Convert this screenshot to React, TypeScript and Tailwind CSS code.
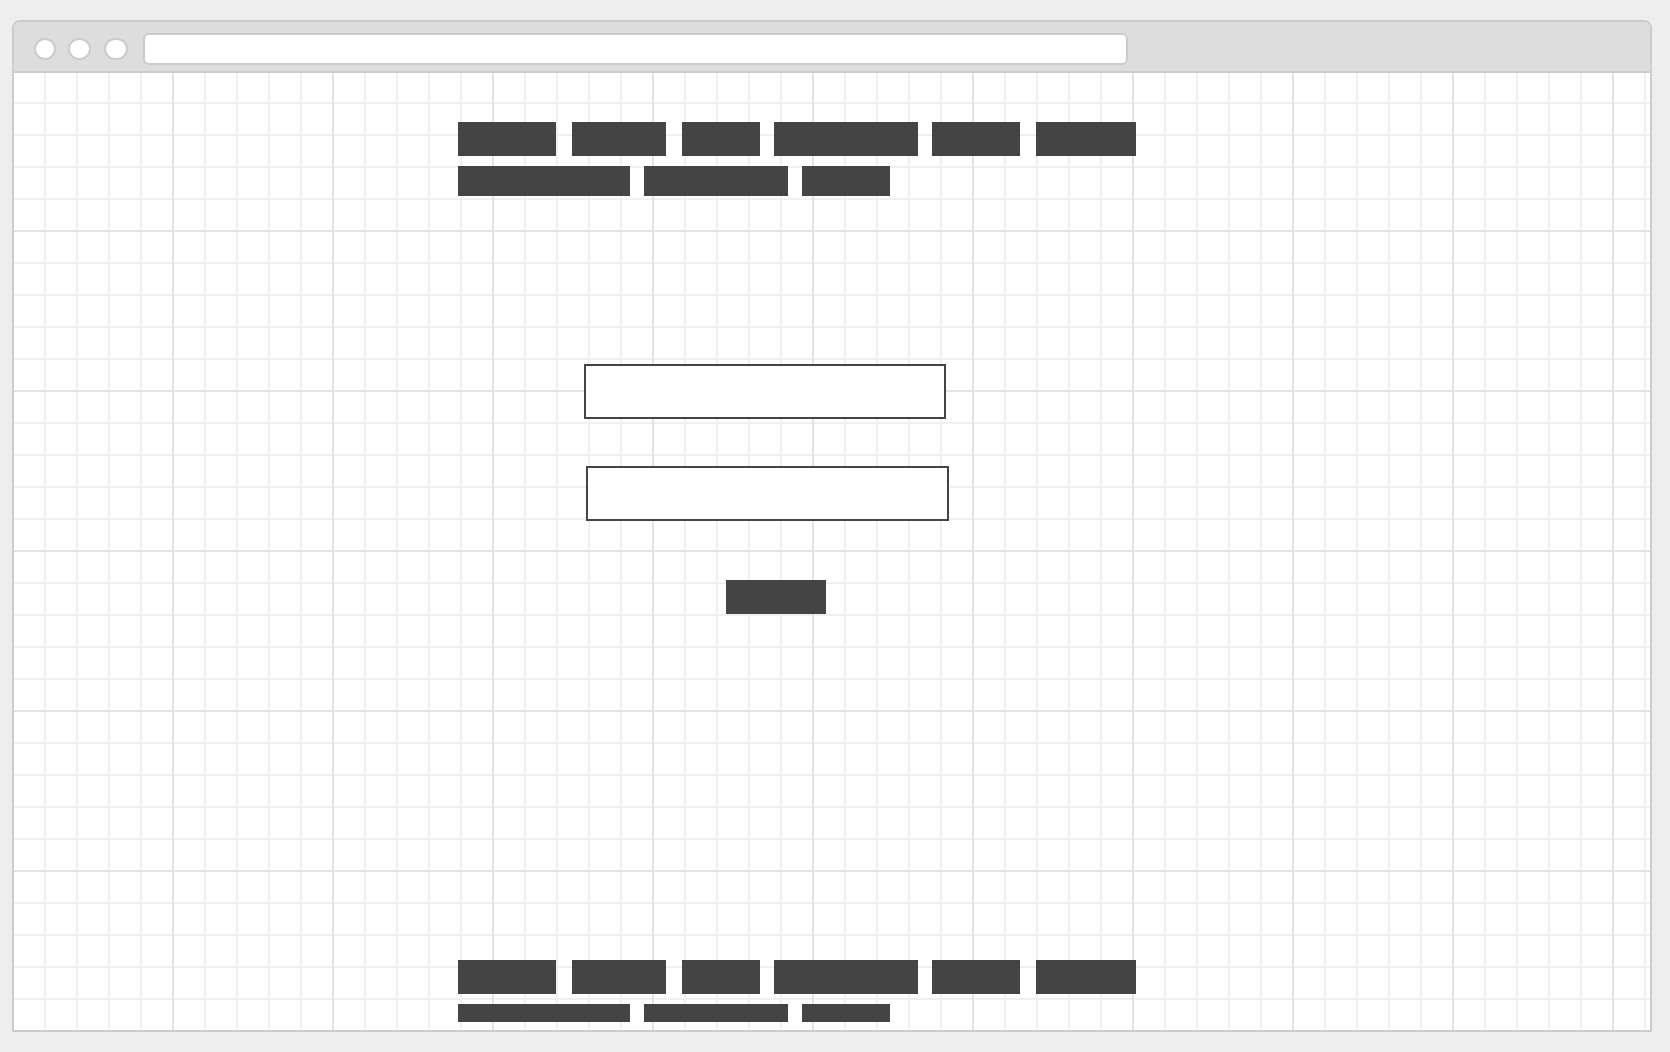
const topLinks = [
  "w-[98px]",
  "ml-[16px] w-[94px]",
  "ml-[16px] w-[78px]",
  "ml-[14px] w-[144px]",
  "ml-[14px] w-[88px]",
  "ml-[16px] w-[100px]",
];

const subLinks = ["w-[172px]", "ml-[14px] w-[144px]", "ml-[14px] w-[88px]"];

function NavBlocks({ subHeight }: { subHeight: string }) {
  return (
    <div className="pl-[444px]">
      <div className="flex h-[34px]">
        {topLinks.map((cls, i) => (
          <span key={i} className={`${cls} block h-full bg-[#444444]`} />
        ))}
      </div>
      <div className={`mt-[10px] flex ${subHeight}`}>
        {subLinks.map((cls, i) => (
          <span key={i} className={`${cls} block h-full bg-[#444444]`} />
        ))}
      </div>
    </div>
  );
}

export default function App() {
  return (
    <div className="h-[1052px] w-[1670px] overflow-hidden bg-[#eeeeee] pl-[12px] pt-[20px] font-['Liberation_Sans',sans-serif]">
      <div className="flex h-[1012px] w-[1640px] flex-col overflow-hidden rounded-t-[8px] border-2 border-[#cccccc] bg-white">
        {/* window chrome */}
        <div className="flex h-[51px] shrink-0 items-start border-b-2 border-[#cccccc] bg-[#dddddd] pl-[20px]">
          <span className="mt-[16px] h-[22px] w-[22px] rounded-full border-2 border-[#cccccc] bg-white" />
          <span className="ml-[12px] mt-[16px] h-[22px] w-[23px] rounded-full border-2 border-[#cccccc] bg-white" />
          <span className="ml-[13px] mt-[16px] h-[22px] w-[24px] rounded-full border-2 border-[#cccccc] bg-white" />
          <div className="ml-[15px] mt-[11px] h-[32px] w-[985px] rounded-[6px] border-2 border-[#cccccc] bg-white" />
        </div>

        {/* page canvas */}
        <div className="flex flex-1 flex-col bg-white bg-[linear-gradient(to_right,#e3e3e3_2px,transparent_2px),linear-gradient(to_bottom,#e3e3e3_2px,transparent_2px),linear-gradient(to_right,#f0f0f0_2px,transparent_2px),linear-gradient(to_bottom,#f0f0f0_2px,transparent_2px)] bg-[length:160px_160px,160px_160px,32px_32px,32px_32px] bg-[position:-2px_-3px]">
          <header className="pt-[49px]">
            <NavBlocks subHeight="h-[30px]" />
          </header>

          <form className="mt-[168px] flex flex-col">
            <input
              aria-label="username"
              className="ml-[570px] h-[55px] w-[362px] border-2 border-[#444444] bg-white outline-none"
            />
            <input
              aria-label="password"
              type="password"
              className="ml-[572px] mt-[47px] h-[55px] w-[363px] border-2 border-[#444444] bg-white outline-none"
            />
            <button
              type="button"
              aria-label="submit"
              className="ml-[712px] mt-[59px] h-[34px] w-[100px] bg-[#444444]"
            />
          </form>

          <footer className="mt-[346px]">
            <NavBlocks subHeight="h-[18px]" />
          </footer>
        </div>
      </div>
    </div>
  );
}
